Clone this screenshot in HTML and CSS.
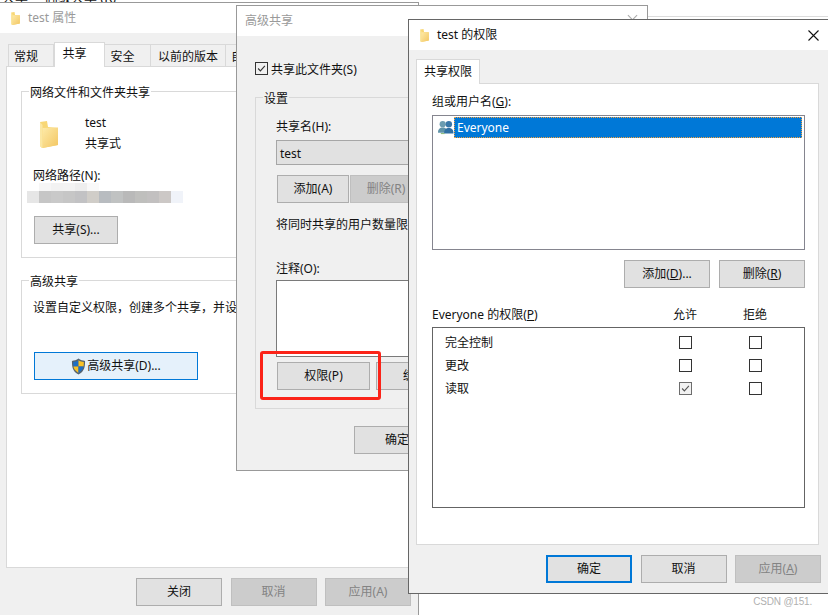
FILE: index.html
```html
<!DOCTYPE html>
<html lang="zh-CN">
<head>
<meta charset="utf-8">
<title>test 的权限</title>
<link rel="stylesheet" href="styles.css">
</head>
<body>
<svg class="defs" width="0" height="0" aria-hidden="true">
  <defs>
    <linearGradient id="fg" x1="0" y1="0" x2="1" y2="1">
      <stop offset="0" stop-color="#fdeaa8"/>
      <stop offset="1" stop-color="#f3c662"/>
    </linearGradient>
    <symbol id="folder" viewBox="0 0 18 27">
      <path d="M0 1 7 0 8 6 18 7 18 24 2 27 0 25Z" fill="#f8d775"/>
      <path d="M2.500 7 18 6.500 18 24 3 27 2.500 25Z" fill="url(#fg)"/>
      <path d="M0 1 2.500 4V27L0 25Z" fill="#fbe7a3"/>
    </symbol>
    <symbol id="check" viewBox="0 0 13 13">
      <path d="M2.500 6.500 5.200 9.300 10.500 3.300" fill="none" stroke="currentColor" stroke-width="1.300"/>
    </symbol>
  </defs>
</svg>

<div class="behind-text">共享 &nbsp; &nbsp; 高级共享 (R)</div>
<div class="behind-line"></div>

<section class="win win-props">
  <header class="titlebar titlebar-off">
    <svg class="ico-small"><use href="#folder"/></svg>
    <span>test 属性</span>
  </header>
  <div class="body body-props">
    <div class="tabs">
      <span class="tab tab-first">常规</span>
      <span class="tab tab-on">共享</span>
      <span class="tab tab-sec">安全</span>
      <span class="tab tab-prev">以前的版本</span>
      <span class="tab tab-last">自定义</span>
    </div>
    <div class="panel panel-props">
      <div class="group group-share">
        <div class="legend">网络文件和文件夹共享</div>
        <div class="info">
          <svg class="ico-big"><use href="#folder"/></svg>
          <div class="info-text">
            <div class="info-name">test</div>
            <div class="info-kind">共享式</div>
          </div>
        </div>
        <div class="path-label">网络路径(N):</div>
        <div class="blur"><div class="blur-a"></div><div class="blur-b"></div></div>
        <button class="btn btn-share">共享(S)...</button>
      </div>
      <div class="group group-adv">
        <div class="legend">高级共享</div>
        <div class="adv-text">设置自定义权限，创建多个共享，并设置其他高级共享选项。</div>
        <button class="btn btn-adv">
          <svg class="shield" viewBox="0 0 16 18">
            <path d="M8 .5C6 2 3.500 2.800 1 3c0 6 .5 11 7 14.500C14.500 14 15 9 15 3 12.500 2.800 10 2 8 .5Z" fill="#56636e"/>
            <path d="M8 2.300V9H2.600C2.400 7.700 2.300 6 2.300 4.200 4.300 4 6.300 3.400 8 2.300Z" fill="#1f6fc4"/>
            <path d="M8 2.300V9h5.400c.2-1.300.3-3 .3-4.800C11.700 4 9.700 3.400 8 2.300Z" fill="#f9c327"/>
            <path d="M2.600 9H8v6.800C4.300 13.600 3 11.500 2.600 9Z" fill="#f9c327"/>
            <path d="M13.400 9H8v6.800c3.700-2.200 5-4.300 5.400-6.800Z" fill="#1f6fc4"/>
          </svg>
          高级共享(D)...
        </button>
      </div>
    </div>
    <div class="actions">
      <button class="btn btn-std">关闭</button>
      <button class="btn btn-std btn-off">取消</button>
      <button class="btn btn-std btn-off">应用(A)</button>
    </div>
  </div>
</section>

<section class="win win-adv">
  <div class="chevron"></div>
  <header class="titlebar titlebar-off"><span>高级共享</span></header>
  <div class="body body-adv">
    <label class="check-row">
      <span class="cb cb-dark"><svg><use href="#check"/></svg></span>
      <span class="check-text">共享此文件夹(S)</span>
    </label>
    <div class="group group-set">
      <div class="legend legend-gray">设置</div>
      <div class="set-inner">
        <div class="set-name">共享名(H):</div>
        <div class="select">test</div>
        <div class="set-btns">
          <button class="btn btn-add">添加(A)</button>
          <button class="btn btn-add btn-off">删除(R)</button>
        </div>
        <div class="set-limit">将同时共享的用户数量限制为(L):</div>
        <div class="set-note">注释(O):</div>
        <div class="note-box"></div>
        <div class="set-foot">
          <button class="btn btn-perm">权限(P)</button>
          <button class="btn btn-perm">缓存(C)</button>
        </div>
      </div>
    </div>
    <div class="actions">
      <button class="btn btn-std">确定</button>
      <button class="btn btn-std">取消</button>
      <button class="btn btn-std">应用</button>
    </div>
  </div>
</section>

<div class="red-box"></div>

<section class="win win-perm">
  <header class="titlebar">
    <svg class="ico-small"><use href="#folder"/></svg>
    <span>test 的权限</span>
    <svg class="close" viewBox="0 0 11 11"><path d="M.5.500 10.500 10.500M10.500.500 .5 10.500" stroke="#111" stroke-width="1.100" fill="none"/></svg>
  </header>
  <div class="body body-perm">
    <div class="tabs tabs-perm"><span class="tab tab-on tab-solo">共享权限</span></div>
    <div class="panel panel-perm">
      <div class="perm-label">组或用户名(<u>G</u>):</div>
      <div class="listbox">
        <div class="list-row">
          <svg class="users" viewBox="0 0 17 15">
            <circle cx="5" cy="4" r="3.300" fill="#6c9cb0"/>
            <path d="M0 13c0-4 2-5.500 5-5.500S10 9 10 13Z" fill="#5f93a8"/>
            <circle cx="11.500" cy="4" r="3.400" fill="#3a78a8"/>
            <path d="M6.500 14c0-4.500 2-6 5-6s5 1.500 5 6Z" fill="#2f6fa3"/>
            <path d="M3 13.500h4v1H3Z" fill="#7db46c"/>
          </svg>
          <span class="list-sel">Everyone</span>
        </div>
      </div>
      <div class="list-btns">
        <button class="btn btn-std">添加(<u>D</u>)...</button>
        <button class="btn btn-std">删除(<u>R</u>)</button>
      </div>
      <div class="perm-grid perm-head">
        <span class="perm-name-head">Everyone 的权限(<u>P</u>)</span>
        <span class="perm-col">允许</span>
        <span class="perm-col">拒绝</span>
      </div>
      <div class="perm-box">
        <div class="perm-grid perm-row">
          <span class="perm-name">完全控制</span>
          <span class="perm-col"><span class="cb"></span></span>
          <span class="perm-col"><span class="cb"></span></span>
        </div>
        <div class="perm-grid perm-row">
          <span class="perm-name">更改</span>
          <span class="perm-col"><span class="cb"></span></span>
          <span class="perm-col"><span class="cb"></span></span>
        </div>
        <div class="perm-grid perm-row">
          <span class="perm-name">读取</span>
          <span class="perm-col"><span class="cb cb-dim"><svg><use href="#check"/></svg></span></span>
          <span class="perm-col"><span class="cb"></span></span>
        </div>
      </div>
    </div>
    <div class="actions">
      <button class="btn btn-std btn-default">确定</button>
      <button class="btn btn-std">取消</button>
      <button class="btn btn-std btn-off">应用(<u>A</u>)</button>
    </div>
  </div>
</section>

<div class="watermark">CSDN @151.</div>
</body>
</html>
```

FILE: styles.css
```css
* { box-sizing: border-box; }

html, body {
  margin: 0;
  width: 828px;
  height: 615px;
  overflow: hidden;
  background: #fff;
}

body {
  position: relative;
  font: 12px/16px "Noto Sans", "Noto Sans CJK SC", sans-serif;
  color: #111;
}

.defs { position: absolute; }

.behind-text {
  position: absolute;
  left: 2px;
  top: -11px;
  white-space: nowrap;
  font-size: 13px;
}

.behind-line {
  position: absolute;
  left: 648px;
  top: 16px;
  width: 180px;
  height: 1px;
  background: #dcdcdc;
}

/* plain text labels sit one pixel low in their 16px line */
.legend, .info-name, .info-kind, .path-label, .adv-text,
.check-text, .set-name, .set-limit, .set-note, .perm-label {
  height: 16px;
  padding-top: 1px;
}

/* windows */
.win {
  position: absolute;
  display: flex;
  flex-direction: column;
  border: 1px solid #999;
  background: #fff;
  overflow: hidden;
}

.win-props { left: -1px; top: 2px; width: 420px; height: 640px; }
.win-adv   { left: 236px; top: 5px; width: 412px; height: 466px; }
.win-perm  { left: 408px; top: 19px; width: 421px; height: 575px; border-color: #666; }

.titlebar {
  flex: none;
  display: flex;
  align-items: center;
  height: 30px;
  background: #fff;
  color: #111;
}

.titlebar-off { color: #9a9a9a; }
.win-props .titlebar { padding-left: 11px; }
.win-props .titlebar span { margin-left: 8px; }
.win-adv .titlebar { padding-left: 8px; }
.win-perm .titlebar { padding-left: 11px; padding-right: 9px; }
.win-perm .titlebar span { margin-left: 8px; }

.ico-small { width: 9px; height: 13px; flex: none; }
.ico-big { width: 18px; height: 27px; flex: none; margin: 7px 27px 0 18px; }

.close { width: 11px; height: 11px; margin-left: auto; }

.chevron {
  position: absolute;
  left: 392px;
  top: 6px;
  width: 7px;
  height: 7px;
  border-right: 1px solid #aaa;
  border-bottom: 1px solid #aaa;
  transform: rotate(45deg);
}

.body {
  flex: 1;
  background: #f0f0f0;
}

.body-props { padding: 9px 7px 0 6px; }
.body-adv { padding: 26px 18px 0 18px; }
.body-perm { padding: 9px 7px 0 7px; }

/* tabs */
.tabs {
  display: flex;
  align-items: flex-end;
  height: 24px;
  padding-left: 2px;
}

.tab {
  height: 22px;
  padding-top: 4px;
  border: 1px solid #d9d9d9;
  border-bottom: 0;
  border-left: 0;
  text-align: center;
  white-space: nowrap;
  background: #f0f0f0;
}

.tab-first { width: 46px; padding-right: 10px; border-left: 1px solid #d9d9d9; }
.tab-on {
  position: relative;
  z-index: 1;
  width: 51px;
  height: 25px;
  margin-bottom: -1px;
  padding-top: 3px;
  padding-right: 10px;
  background: #fff;
  border-left: 1px solid #d9d9d9;
}
.tab-sec { width: 46px; padding-right: 10px; }
.tab-prev { width: 75px; }
.tab-last { padding-left: 5px; }

.tabs-perm { padding-left: 0; }
.tab-solo { width: 64px; padding-right: 0; padding-top: 4px; text-align: center; }

/* panels */
.panel {
  background: #fff;
  border: 1px solid #d9d9d9;
}

.panel-props { width: 406px; height: 502px; padding: 24px 15px 0 14px; }
.panel-perm { width: 403px; height: 462px; padding: 9px 13px 0 15px; }

/* group boxes */
.group { border: 1px solid #d9d9d9; }

.legend {
  width: fit-content;
  margin: -8px 0 0 7px;
  padding-left: 1px;
  padding-right: 1px;
  background: #fff;
  white-space: nowrap;
}

.legend-gray { background: #f0f0f0; }

.group-share { padding-bottom: 12px; height: 167px; }
.group-adv { margin-top: 22px; height: 114px; }
.group-set { margin-top: 22px; height: 312px; width: 376px; }

.info { display: flex; margin-top: 14px; }
.info-kind { margin-top: 5px; }

.path-label { margin: 16px 0 0 11px; }

.blur { margin-left: 5px; width: 156px; }
.blur-a {
  height: 8px;
  margin-left: 12px;
  width: 60px;
  background: linear-gradient(90deg, #f6f6f6 0 12px, #f2f2f2 12px 24px, #f3f3f3 24px 36px, #eeeeee 36px 48px, #f9f9f9 48px 60px);
}
.blur-b {
  height: 12px;
  background: linear-gradient(90deg,
    #e6e6e6 0 12px, #c6c6c6 12px 24px, #c9c9c9 24px 36px, #c6c6c6 36px 48px,
    #c2c2c4 48px 60px, #d0cdc8 60px 72px, #b8bcc0 72px 84px, #c0c2c2 84px 96px,
    #b9b9b9 96px 108px, #bfbfbd 108px 120px, #c2c0c0 120px 132px, #ccc8c6 132px 144px,
    #f0f3f9 144px 156px);
}

.adv-text { margin: 10px 0 0 11px; white-space: nowrap; }

/* buttons */
.btn {
  display: inline-flex;
  align-items: center;
  justify-content: center;
  height: 28px;
  padding: 0;
  border: 1px solid #adadad;
  background: #e1e1e1;
  color: #111;
  font: inherit;
  white-space: nowrap;
}

.btn-std { width: 86px; }
.btn-share { display: flex; width: 84px; margin: 13px 0 0 12px; }

.btn-adv {
  display: flex;
  width: 164px;
  margin: 37px 0 0 12px;
  background: #e5f1fb;
  border-color: #0078d7;
}

.shield { width: 15px; height: 17px; margin-right: 1px; }

.btn-off {
  background: #cccccc;
  border-color: #bfbfbf;
  color: #838383;
}

.btn-default { border: 2px solid #0078d7; }

.actions {
  display: flex;
  justify-content: flex-end;
  gap: 8.5px;
  margin-top: 10px;
}

.body-adv .actions { margin-top: 17px; }

/* advanced dialog */
.check-row { display: flex; align-items: center; gap: 3px; height: 13px; white-space: nowrap; }

.cb {
  display: inline-block;
  width: 13px;
  height: 13px;
  flex: none;
  border: 1px solid #333;
  background: #fff;
  color: #333;
}

.cb svg { display: block; width: 11px; height: 11px; }
.cb-dark { background: transparent; }
.cb-dim { border-color: #6d6d6d; color: #555; background: #f2f2f2; }

.set-inner { padding: 12px 0 0 20px; }

.select {
  width: 340px;
  height: 25px;
  margin-top: 6px;
  padding: 5px 0 0 3px;
  background: #e1e1e1;
  border: 1px solid #a6a6a6;
}

.set-btns { display: flex; gap: 1px; margin: 10px 0 0 1px; }
.btn-add { width: 72px; }

.set-limit { margin-top: 13px; white-space: nowrap; }
.set-note { margin-top: 28px; }

.note-box {
  width: 340px;
  height: 77px;
  margin-top: 4px;
  background: #fff;
  border: 1px solid #7a7a7a;
}

.set-foot { display: flex; gap: 6px; margin: 5px 0 0 1px; }
.btn-perm { width: 93px; }

.red-box {
  position: absolute;
  left: 260px;
  top: 351px;
  width: 121px;
  height: 49px;
  border: 3px solid #fb2318;
  border-radius: 3px;
}

/* permissions dialog */
.perm-label { white-space: nowrap; }

.listbox {
  height: 135px;
  margin-top: 6px;
  padding: 1px;
  border: 1px solid #85858f;
  background: #fff;
}

.list-row { display: flex; align-items: center; height: 21px; padding-left: 4px; }
.users { width: 16px; height: 15px; flex: none; }

.list-sel {
  flex: 1;
  height: 21px;
  margin-right: 1px;
  padding: 3px 0 0 3px;
  background: #0078d7;
  color: #fff;
  outline: 1px dotted #f0a040;
  outline-offset: -1px;
}

.list-btns {
  display: flex;
  justify-content: flex-end;
  gap: 9px;
  margin-top: 10px;
}

.perm-grid {
  display: grid;
  grid-template-columns: 1fr 70px 70px;
  align-items: center;
}

.perm-head { margin-top: 19px; padding-right: 15px; }
.perm-name-head { white-space: nowrap; }
.perm-col { display: flex; justify-content: center; }

.perm-box {
  height: 181px;
  margin-top: 4px;
  padding: 3px 14px 0 12px;
  border: 1px solid #646464;
  background: #fff;
}

.perm-row { height: 23px; }

.watermark {
  position: absolute;
  right: 16px;
  top: 595px;
  color: #b0b0b0;
  font: 10px/13px "Liberation Sans", sans-serif;
  letter-spacing: -0.2px;
  background: #fff;
}
```
